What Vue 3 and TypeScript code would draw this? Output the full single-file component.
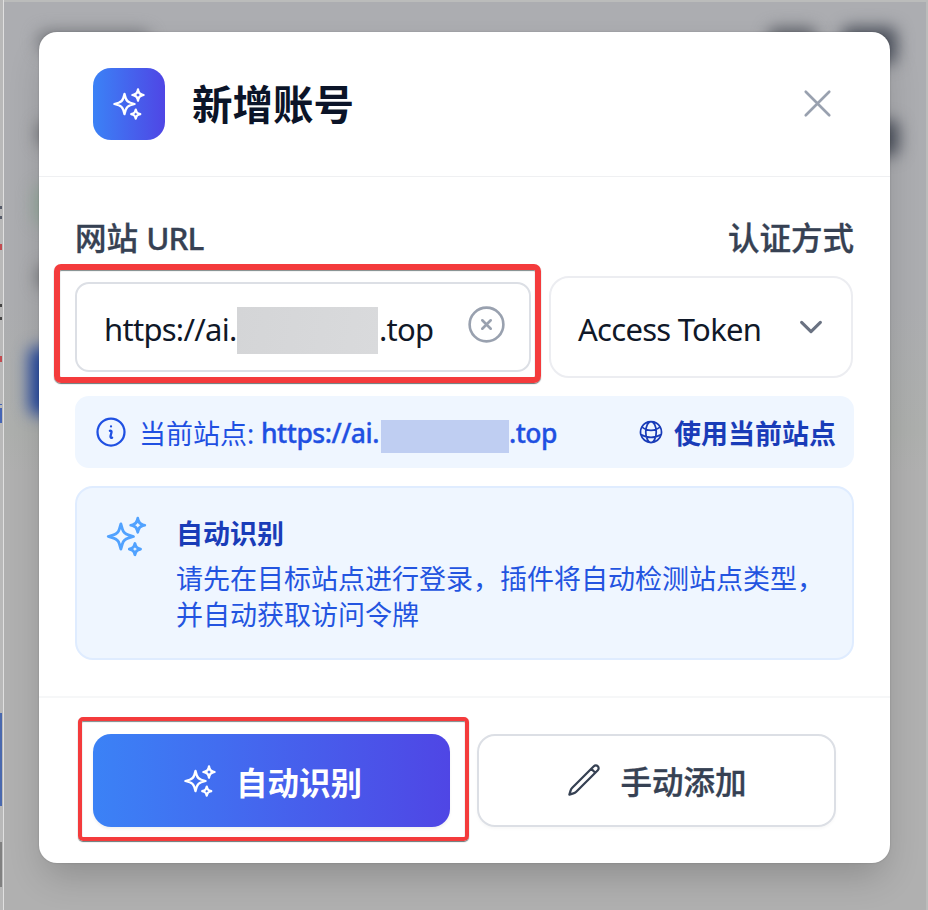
<script setup lang="ts">
import { ref } from 'vue'

const icons = {
  sparkles:
    'M9.813 15.904 9 18.75l-.813-2.846a4.5 4.5 0 0 0-3.09-3.09L2.25 12l2.846-.813a4.5 4.5 0 0 0 3.09-3.09L9 5.25l.813 2.846a4.5 4.5 0 0 0 3.09 3.09L15.75 12l-2.846.813a4.5 4.5 0 0 0-3.09 3.09ZM18.259 8.715 18 9.75l-.259-1.035a3.375 3.375 0 0 0-2.455-2.456L14.25 6l1.036-.259a3.375 3.375 0 0 0 2.455-2.456L18 2.25l.259 1.035a3.375 3.375 0 0 0 2.456 2.456L21.75 6l-1.035.259a3.375 3.375 0 0 0-2.456 2.456ZM16.894 20.567 16.5 21.75l-.394-1.183a2.25 2.25 0 0 0-1.423-1.423L13.5 18.75l1.183-.394a2.25 2.25 0 0 0 1.423-1.423l.394-1.183.394 1.183a2.25 2.25 0 0 0 1.423 1.423l1.183.394-1.183.394a2.25 2.25 0 0 0-1.423 1.423Z',
  close: 'M6 18 18 6M6 6l12 12',
  clear: 'm9.75 9.75 4.5 4.5m0-4.5-4.5 4.5M21 12a9 9 0 1 1-18 0 9 9 0 0 1 18 0Z',
  chevron: 'm19.5 8.25-7.5 7.5-7.5-7.5',
  info: 'm11.25 11.25.041-.02a.75.75 0 0 1 1.063.852l-.708 2.836a.75.75 0 0 0 1.063.853l.041-.021M21 12a9 9 0 1 1-18 0 9 9 0 0 1 18 0Zm-9-3.75h.008v.008H12V8.25Z',
  globe:
    'M12 21a9.004 9.004 0 0 0 8.716-6.747M12 21a9.004 9.004 0 0 1-8.716-6.747M12 21c2.485 0 4.5-4.03 4.5-9S14.485 3 12 3m0 18c-2.485 0-4.5-4.03-4.5-9S9.515 3 12 3m0 0a8.997 8.997 0 0 1 7.843 4.582M12 3a8.997 8.997 0 0 0-7.843 4.582m15.686 0A11.953 11.953 0 0 1 12 10.5c-2.998 0-5.74-1.1-7.843-2.918m15.686 0A8.959 8.959 0 0 1 21 12c0 .778-.099 1.533-.284 2.253m0 0A17.919 17.919 0 0 1 12 16.5c-3.162 0-6.133-.815-8.716-2.247m0 0A9.015 9.015 0 0 1 3 12c0-1.605.42-3.113 1.157-4.418',
  pencil:
    'm16.862 4.487 1.687-1.688a1.875 1.875 0 1 1 2.652 2.652L6.832 19.82a4.5 4.5 0 0 1-1.897 1.13l-2.685.8.8-2.685a4.5 4.5 0 0 1 1.13-1.897L16.863 4.487Zm0 0L19.5 7.125',
}

const authMethod = ref('Access Token')
</script>

<template>
  <div class="page">
    <div class="strip"></div>
    <div class="backdrop">
      <i class="blob heading"></i>
      <i class="blob action-a"></i>
      <i class="blob action-b"></i>
      <i class="blob action-c"></i>
      <i class="blob left-a"></i>
      <i class="blob left-b"></i>
      <i class="blob green"></i>
      <i class="blob blue"></i>
    </div>

    <section class="modal" role="dialog">
      <header class="head">
        <span class="badge">
          <svg class="icon i36" viewBox="0 0 24 24"><path :d="icons.sparkles" /></svg>
        </span>
        <h2 class="title">新增账号</h2>
        <button class="close" type="button">
          <svg class="icon i54" viewBox="0 0 24 24"><path :d="icons.close" /></svg>
        </button>
      </header>

      <main class="body">
        <div class="labels">
          <span class="label">网站 <span class="lat">URL</span></span>
          <span class="label">认证方式</span>
        </div>

        <div class="fields">
          <div class="mark mark-url">
            <div class="input">
              <span class="proto">https://ai.</span><span class="mask"></span><span class="tld">.top</span>
              <svg class="icon clear" viewBox="0 0 24 24"><path :d="icons.clear" /></svg>
            </div>
          </div>
          <div class="select">
            <span class="value">{{ authMethod }}</span>
            <svg class="icon chev" viewBox="0 0 24 24"><path :d="icons.chevron" /></svg>
          </div>
        </div>

        <div class="site">
          <svg class="icon i36 info" viewBox="0 0 24 24"><path :d="icons.info" /></svg>
          <span class="site-label">当前站点:</span>
          <span class="site-url"><span class="site-proto">https://ai.</span><span class="site-mask"></span><span class="site-tld">.top</span></span>
          <button class="use" type="button">
            <svg class="icon globe" viewBox="0 0 24 24"><path :d="icons.globe" /></svg>
            <span>使用当前站点</span>
          </button>
        </div>

        <div class="card">
          <svg class="icon i45" viewBox="0 0 24 24"><path :d="icons.sparkles" /></svg>
          <div class="card-text">
            <h3>自动识别</h3>
            <p>请先在目标站点进行登录，插件将自动检测站点类型，<br />并自动获取访问令牌</p>
          </div>
        </div>
      </main>

      <footer class="foot">
        <div class="mark mark-auto">
          <button class="btn primary" type="button">
            <svg class="icon i36" viewBox="0 0 24 24"><path :d="icons.sparkles" /></svg>
            <span>自动识别</span>
          </button>
        </div>
        <button class="btn secondary" type="button">
          <svg class="icon i36" viewBox="0 0 24 24"><path :d="icons.pencil" /></svg>
          <span class="medium">手动添加</span>
        </button>
      </footer>
    </section>
  </div>
</template>

<style>
body {
  margin: 0;
}
</style>

<style scoped>
* {
  box-sizing: border-box;
}
.page {
  position: relative;
  display: flex;
  width: 928px;
  height: 910px;
  padding: 32px 38px 0 39px;
  overflow: hidden;
  background: #afafaf;
  font-family: 'Noto Sans', 'Noto Sans CJK SC', sans-serif;
}
.backdrop {
  position: absolute;
  inset: 2px 2px 0 4px;
  overflow: hidden;
  background: linear-gradient(180deg, #acadb1 0, #acadb0 300px, #adafad 430px, #b0b0b0 470px, #b0b0b0 100%);
}
.page::before {
  content: '';
  position: absolute;
  inset: 0;
  background: #bbbcbb;
}
/* Sliver of the page beside the popup */
.strip {
  position: absolute;
  left: 0;
  top: 0;
  width: 4px;
  height: 910px;
  border-right: 1px solid #e0e0e0;
  background:
    linear-gradient(#555a68, #555a68) 0 206px / 2px 3px no-repeat,
    linear-gradient(#555a68, #555a68) 0 216px / 2px 3px no-repeat,
    linear-gradient(#c14b50, #c14b50) 0 244px / 2px 6px no-repeat,
    linear-gradient(#444, #444) 0 304px / 2px 3px no-repeat,
    linear-gradient(#444, #444) 0 317px / 2px 3px no-repeat,
    linear-gradient(#c14b50, #c14b50) 0 356px / 2px 6px no-repeat,
    linear-gradient(#4565b5, #4565b5) 0 404px / 2px 1px no-repeat,
    linear-gradient(#4565b5, #4565b5) 0 408px / 2px 15px no-repeat,
    linear-gradient(#4a69ae, #4a69ae) 0 713px / 2px 93px no-repeat,
    linear-gradient(#808080, #808080) 0 842px / 2px 45px no-repeat,
    #b9b9b9;
}
.blob {
  position: absolute;
  border-radius: 8px;
  filter: blur(8px);
}
.heading { left: 34px; top: 29px; width: 112px; height: 22px; background: #77797e; }
.action-a { left: 764px; top: 26px; width: 48px; height: 34px; background: #5c5f67; }
.action-b { left: 838px; top: 25px; width: 55px; height: 37px; background: #4d525d; }
.action-c { left: 850px; top: 118px; width: 45px; height: 36px; background: #4d525d; }
.left-a { left: 33px; top: 120px; width: 40px; height: 24px; background: #74757a; }
.left-b { left: 33px; top: 264px; width: 40px; height: 22px; background: #74757a; }
.green { left: 30px; top: 184px; width: 40px; height: 38px; background: #93a89b; }
.blue { left: 25px; top: 345px; width: 60px; height: 68px; background: #24489f; }

.modal {
  position: relative;
  display: flex;
  flex-direction: column;
  width: 851px;
  height: 831px;
  border-radius: 18px;
  background: #fff;
  box-shadow: 0 18px 36px -6px rgba(0, 0, 0, 0.2), 0 0 2px rgba(0, 0, 0, 0.2);
}
.icon {
  flex: none;
  fill: none;
  stroke: currentColor;
  stroke-width: 1.5;
  stroke-linecap: round;
  stroke-linejoin: round;
}
.i36 { width: 36px; height: 36px; }
.i45 { width: 45px; height: 45px; }
.i54 { width: 47px; height: 47px; stroke-width: 1.35; }

button {
  padding: 0;
  border: 0;
  background: none;
  font: inherit;
  color: inherit;
}
.head {
  display: flex;
  align-items: center;
  height: 145px;
  padding: 0 49px 0 54px;
  border-bottom: 1px solid #eff0f2;
}
.badge {
  display: flex;
  align-items: center;
  justify-content: center;
  width: 72px;
  height: 72px;
  border-radius: 18px;
  background: linear-gradient(90deg, #3b82f6, #4f46e5);
  color: #fff;
}
.title {
  margin: 2px 0 0 27px;
  font-size: 40.5px;
  line-height: 54px;
  font-weight: 600;
  color: #0b1428;
}
.close {
  display: flex;
  margin: -1px 0 0 auto;
  color: #99a1af;
}
.body {
  height: 519px;
  padding: 42px 36px 0 36px;
}
.labels {
  display: flex;
  justify-content: space-between;
  height: 45px;
  line-height: 38px;
  font-size: 31.5px;
  font-weight: 500;
  color: #364153;
  -webkit-text-stroke: 0.35px currentColor;
}
.lat {
  letter-spacing: -0.9px;
}
.medium {
  -webkit-text-stroke: 0.35px currentColor;
}
.fields {
  display: flex;
  align-items: center;
  height: 119px;
  margin-left: -21px;
}
.mark {
  flex: none;
  border-style: solid;
  border-color: #f43b3c;
  box-shadow: 0 1px 1px rgba(40, 60, 60, 0.7), inset 0 1px 1px rgba(40, 60, 60, 0.6);
}
.mark-url {
  width: 487px;
  height: 119px;
  padding: 12px 4px 0 15px;
  border-width: 6px;
  border-radius: 7px;
}
.input {
  display: flex;
  align-items: center;
  width: 456px;
  height: 90px;
  padding: 0 20px 0 27px;
  border: 2px solid #dcdfe5;
  border-radius: 14px;
  font-size: 31px;
  letter-spacing: -0.72px;
  color: #101828;
}
.proto,
.tld {
  padding-top: 4px;
  white-space: pre;
}
.proto { width: 133px; }
.tld {
  padding-left: 1px;
}
.mask {
  width: 141px;
  height: 47px;
  margin-top: 7px;
  background: linear-gradient(100deg, #d4d5d7, #d9dadc);
}
.clear {
  width: 45px;
  height: 45px;
  margin: -5px 0 0 auto;
  stroke-width: 1.4;
  color: #99a1af;
}
.select {
  display: flex;
  align-items: center;
  justify-content: space-between;
  width: 304px;
  height: 102px;
  margin: 6px 0 0 8px;
  padding: 0 25px 0 27px;
  border: 2px solid #ecedf1;
  border-radius: 20px;
  font-size: 31px;
  letter-spacing: -0.72px;
  color: #101828;
}
.value {
  padding-top: 4px;
}
.chev {
  width: 30px;
  height: 30px;
  stroke-width: 2.5;
  color: #6a7282;
}
.site {
  display: flex;
  align-items: center;
  height: 72px;
  margin-top: 13px;
  padding: 0 18px;
  border-radius: 14px;
  background: #eff6ff;
  font-size: 27px;
  color: #1f50e2;
}
.site-label {
  width: 122px;
  margin-left: 10px;
  white-space: nowrap;
}
.site-url {
  display: flex;
  align-items: center;
  font-weight: 500;
  font-size: 26.5px;
  letter-spacing: -0.5px;
  -webkit-text-stroke: 0.35px currentColor;
}
.site-proto { width: 120px; }
.site-proto,
.site-tld {
  padding-top: 2px;
}
.site-mask {
  width: 128px;
  height: 33px;
  margin-top: 8px;
  background: #bfcef2;
}
.use {
  display: flex;
  align-items: center;
  gap: 9px;
  margin-left: auto;
  font-weight: 600;
  color: #193cb8;
}
.globe {
  width: 28px;
  height: 28px;
}
.card {
  display: flex;
  height: 174px;
  margin-top: 18px;
  padding: 26px 27px;
  border: 2px solid #dfecff;
  border-radius: 18px;
  background: #eff6ff;
  color: #51a2ff;
}
.card-text {
  padding-top: 2px;
  margin-left: 27px;
}
.card h3 {
  margin: 0 0 9px;
  font-size: 27px;
  line-height: 36px;
  font-weight: 600;
  color: #193cb8;
}
.card p {
  margin: 0;
  font-size: 27px;
  line-height: 36px;
  white-space: nowrap;
  color: #2354e0;
}
.foot {
  display: flex;
  align-items: center;
  height: 167px;
  padding: 0 0 3px 39px;
  border-top: 2px solid #f6f7f8;
}
.mark-auto {
  display: flex;
  width: 391px;
  height: 124px;
  padding: 13px 11px;
  border-width: 4px;
  border-radius: 5px;
}
.btn {
  display: flex;
  align-items: center;
  justify-content: center;
  gap: 18px;
  font-size: 31.5px;
  border-radius: 18px;
}
.primary {
  width: 357px;
  height: 93px;
  padding-left: 1px;
  font-weight: 600;
  color: #fff;
  background: linear-gradient(90deg, #3b82f6, #4f46e5);
  box-shadow: 0 2px 3px rgba(0, 0, 0, 0.06);
}
.secondary {
  width: 359px;
  height: 93px;
  margin: 2px 0 0 8px;
  border: 2px solid #dcdfe5;
  font-weight: 500;
  color: #364153;
  box-shadow: 0 2px 3px rgba(0, 0, 0, 0.03);
}
</style>
